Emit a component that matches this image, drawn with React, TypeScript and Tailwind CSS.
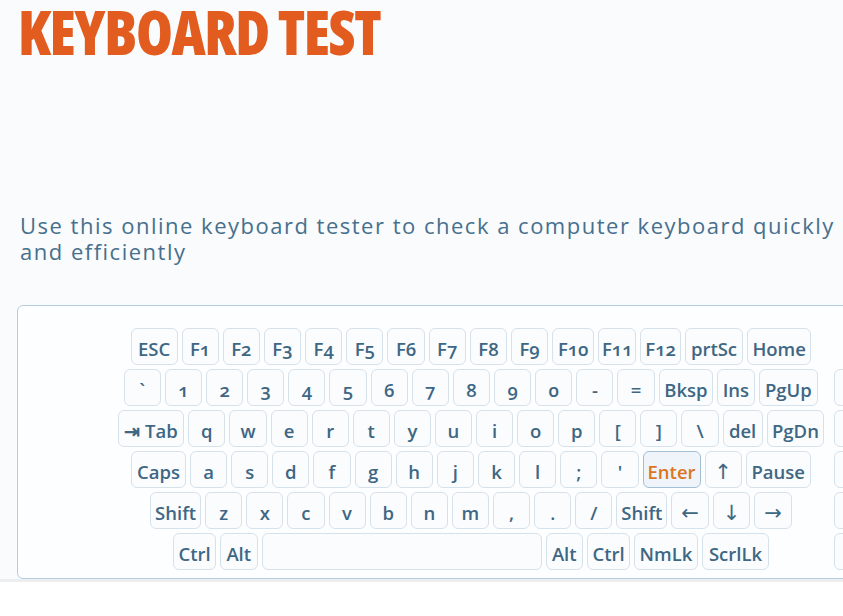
import React from "react";

type K = { l: string; w: string; hi?: boolean; arrow?: boolean };

const N = "w-[37.15px]";

const rows: K[][] = [
  [
    { l: "ESC", w: "w-[46.7px]" },
    { l: "F1", w: "w-[37.2px]" },
    { l: "F2", w: "w-[37.2px]" },
    { l: "F3", w: "w-[37.2px]" },
    { l: "F4", w: "w-[37.2px]" },
    { l: "F5", w: "w-[37.2px]" },
    { l: "F6", w: "w-[37.2px]" },
    { l: "F7", w: "w-[37.2px]" },
    { l: "F8", w: "w-[37.2px]" },
    { l: "F9", w: "w-[37.2px]" },
    { l: "F10", w: "w-[42px]" },
    { l: "F11", w: "w-[38.3px]" },
    { l: "F12", w: "w-[40.3px]" },
    { l: "prtSc", w: "w-[58.4px]" },
    { l: "Home", w: "w-[64px]" },
  ],
  [
    { l: "`", w: N },
    { l: "1", w: N },
    { l: "2", w: N },
    { l: "3", w: N },
    { l: "4", w: N },
    { l: "5", w: N },
    { l: "6", w: N },
    { l: "7", w: N },
    { l: "8", w: N },
    { l: "9", w: N },
    { l: "0", w: N },
    { l: "-", w: N },
    { l: "=", w: N },
    { l: "Bksp", w: "w-[54.7px]" },
    { l: "Ins", w: "w-[37.3px]" },
    { l: "PgUp", w: "w-[59.7px]" },
  ],
  [
    { l: "⇥ Tab", w: "w-[66.7px]" },
    { l: "q", w: "w-[37.1px]" },
    { l: "w", w: "w-[37.1px]" },
    { l: "e", w: "w-[37.1px]" },
    { l: "r", w: "w-[37.1px]" },
    { l: "t", w: "w-[37.1px]" },
    { l: "y", w: "w-[37.1px]" },
    { l: "u", w: "w-[37.1px]" },
    { l: "i", w: "w-[37.1px]" },
    { l: "o", w: "w-[37.1px]" },
    { l: "p", w: "w-[37.1px]" },
    { l: "[", w: "w-[37.1px]" },
    { l: "]", w: "w-[37.1px]" },
    { l: "\\", w: "w-[37.1px]" },
    { l: "del", w: "w-[40px]" },
    { l: "PgDn", w: "w-[57.8px]" },
  ],
  [
    { l: "Caps", w: "w-[55px]" },
    { l: "a", w: N },
    { l: "s", w: N },
    { l: "d", w: N },
    { l: "f", w: N },
    { l: "g", w: N },
    { l: "h", w: N },
    { l: "j", w: N },
    { l: "k", w: N },
    { l: "l", w: N },
    { l: ";", w: N },
    { l: "'", w: N },
    { l: "Enter", w: "w-[58px]", hi: true },
    { l: "↑", w: "w-[37px]", arrow: true },
    { l: "Pause", w: "w-[65.5px]" },
  ],
  [
    { l: "Shift", w: "w-[51px]" },
    { l: "z", w: "w-[37.13px]" },
    { l: "x", w: "w-[37.13px]" },
    { l: "c", w: "w-[37.13px]" },
    { l: "v", w: "w-[37.13px]" },
    { l: "b", w: "w-[37.13px]" },
    { l: "n", w: "w-[37.13px]" },
    { l: "m", w: "w-[37.13px]" },
    { l: ",", w: "w-[37.13px]" },
    { l: ".", w: "w-[37.13px]" },
    { l: "/", w: "w-[37.13px]" },
    { l: "Shift", w: "w-[51px]" },
    { l: "←", w: "w-[37.5px]", arrow: true },
    { l: "↓", w: "w-[37.5px]", arrow: true },
    { l: "→", w: "w-[37.5px]", arrow: true },
  ],
  [
    { l: "Ctrl", w: "w-[43px]" },
    { l: "Alt", w: "w-[37.5px]" },
    { l: "", w: "w-[280px]" },
    { l: "Alt", w: "w-[37.5px]" },
    { l: "Ctrl", w: "w-[43px]" },
    { l: "NmLk", w: "w-[64px]" },
    { l: "ScrlLk", w: "w-[67px]" },
  ],
];

function Key({ k }: { k: K }) {
  return (
    <div
      className={
        "h-[37px] shrink-0 flex items-center justify-center rounded-[6px] border whitespace-nowrap [font-variant-numeric:oldstyle-nums] " +
        k.w +
        " " +
        (k.arrow
          ? "pt-[5px] text-[21px] leading-[21px] font-normal font-['DejaVu_Sans',sans-serif] "
          : "pt-[4px] text-[18.5px] leading-[18px] font-semibold ") +
        (k.hi
          ? "border-[#a3bfd8] bg-[#eef4f9] text-[#db761f]"
          : "border-[#d6e2eb] bg-[#fbfcfd] text-[#3e6784]")
      }
    >
      {k.l}
    </div>
  );
}

export default function App() {
  return (
    <div className="w-[843px] h-[616px] overflow-hidden bg-white font-['Open_Sans','Liberation_Sans',sans-serif]">
      <div className="bg-[#fafbfc] border-b-[3px] border-[#eceef0]">
        <h1 className="pl-[18px] text-[62px] leading-[62px] font-extrabold text-[#e25b1f] [font-stretch:75%] tracking-[-1.5px] whitespace-nowrap">
          <span className="inline-block origin-left scale-x-[0.96]">KEYBOARD TEST</span>
        </h1>
        <p className="mt-[150px] pl-[20px] text-[22px] leading-[26px] font-medium tracking-[1.5px] text-[#46708d] whitespace-nowrap">
          Use this online keyboard tester to check a computer keyboard quickly
          <br />
          and efficiently
        </p>
        <div className="mt-[41px] ml-[17px] w-[1000px] rounded-[6px] border border-[#b5cde0] bg-[#fdfeff] pt-[22px] pb-[8px] pl-[94px] flex gap-[4px]">
          <div className="w-[718px] flex flex-col gap-[4px]">
            {rows.map((r, i) => (
              <div key={i} className="flex justify-center gap-[4px]">
                {r.map((k, j) => (
                  <Key key={j} k={k} />
                ))}
              </div>
            ))}
          </div>
          <div className="flex flex-col gap-[4px]">
            <div className="h-[37px]" />
            {[0, 1, 2, 3, 4].map((i) => (
              <div key={i} className="flex gap-[4px]">
                <div className="h-[37px] w-[37px] rounded-[6px] border border-[#d6e2eb] bg-[#fbfcfd]" />
                <div className="h-[37px] w-[37px] rounded-[6px] border border-[#d6e2eb] bg-[#fbfcfd]" />
              </div>
            ))}
          </div>
        </div>
      </div>
    </div>
  );
}
